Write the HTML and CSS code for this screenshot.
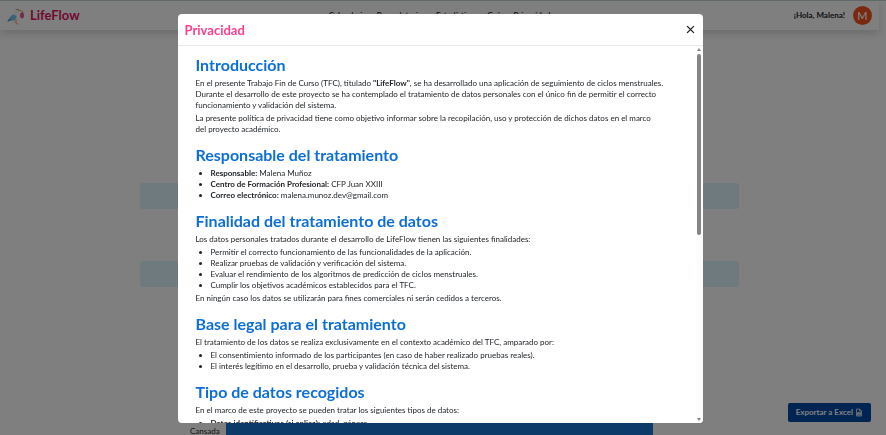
FILE: index.html
```html
<!DOCTYPE html>
<html lang="es">
<head>
<meta charset="utf-8">
<meta name="viewport" content="width=device-width, initial-scale=1">
<title>LifeFlow</title>
<link rel="stylesheet" href="styles.css">
</head>
<body>
<div class="page">
  <header class="navbar">
    <a class="brand" href="#">
      <svg class="stork" viewBox="0 0 36 36" aria-hidden="true">
        <path d="M18 24l1 10h4M15 25l3 8" stroke="#f4a04a" stroke-width="1.500" fill="none"/>
        <path d="M14 4c3-4 9-2 9 2 0 4-4 5-3 10 1 6-2 11-8 11-4 0-5-3-2-7 3-5 7-6 6-10-1-2-3-3-2-6z" fill="#f4f4f4"/>
        <path d="M15 15c-6 0-10 5-12 12 3-1 5-1 8 0 4 1 8-4 8-8z" fill="#7cc3ee"/>
        <path d="M4 24c-2 2-3 4-3 6 3-3 6-2 9-4z" fill="#3b88c3"/>
        <path d="M22 4l11 5-11-1z" fill="#f4a04a"/>
        <path d="M31 7l-2 6h4z" fill="#f27ba6"/>
        <ellipse cx="30" cy="17" rx="4" ry="6" fill="#f0568f"/>
        <circle cx="20" cy="5" r="1" fill="#333"/>
      </svg>
      <span>LifeFlow</span>
    </a>
    <nav class="links">
      <a href="#">Calendario</a>
      <a href="#">Recordatorios</a>
      <a href="#">Estadísticas</a>
      <a href="#">Guía</a>
      <a href="#">Privacidad</a>
    </nav>
    <div class="user"><span>¡Hola, Malena!</span><span class="avatar">M</span></div>
  </header>
  <main class="content">
    <div class="panel"></div>
    <div class="panel"></div>
    <div class="chart"><span class="chart-label">Cansada</span><div class="bar"></div></div>
  </main>
  <button class="export" type="button">Exportar a Excel
    <svg viewBox="0 0 16 16" aria-hidden="true"><path d="M3 1h6l4 4v10H3zM9 1v4h4M5 8h6v5H5zM5 10.500h6M8 8v5" fill="none" stroke="currentColor" stroke-width="1.500"/></svg>
  </button>
</div>

<div class="backdrop">
  <section class="modal" role="dialog" aria-modal="true" aria-labelledby="modal-title">
    <header class="modal-header">
      <h1 id="modal-title">Privacidad</h1>
      <button class="close" type="button" aria-label="Cerrar"><svg viewBox="0 0 8 8" aria-hidden="true"><path d="M1 1l6 6M7 1l-6 6" stroke="currentColor" stroke-width="1.200"/></svg></button>
    </header>
    <div class="modal-body">
      <article class="text">
        <h2>Introducción</h2>
        <p>En el presente Trabajo Fin de Curso (TFC), titulado <strong>"LifeFlow"</strong>, se ha desarrollado una aplicación de seguimiento de ciclos menstruales.<br>Durante el desarrollo de este proyecto se ha contemplado el tratamiento de datos personales con el único fin de permitir el correcto<br>funcionamiento y validación del sistema.</p>
        <p>La presente política de privacidad tiene como objetivo informar sobre la recopilación, uso y protección de dichos datos en el marco<br>del proyecto académico.</p>
        <h2>Responsable del tratamiento</h2>
        <ul>
          <li><strong>Responsable:</strong> Malena Muñoz</li>
          <li><strong>Centro de Formación Profesional:</strong> CFP Juan XXIII</li>
          <li><strong>Correo electrónico:</strong> malena.munoz.dev@gmail.com</li>
        </ul>
        <h2>Finalidad del tratamiento de datos</h2>
        <p>Los datos personales tratados durante el desarrollo de LifeFlow tienen las siguientes finalidades:</p>
        <ul>
          <li>Permitir el correcto funcionamiento de las funcionalidades de la aplicación.</li>
          <li>Realizar pruebas de validación y verificación del sistema.</li>
          <li>Evaluar el rendimiento de los algoritmos de predicción de ciclos menstruales.</li>
          <li>Cumplir los objetivos académicos establecidos para el TFC.</li>
        </ul>
        <p>En ningún caso los datos se utilizarán para fines comerciales ni serán cedidos a terceros.</p>
        <h2>Base legal para el tratamiento</h2>
        <p>El tratamiento de los datos se realiza exclusivamente en el contexto académico del TFC, amparado por:</p>
        <ul>
          <li>El consentimiento informado de los participantes (en caso de haber realizado pruebas reales).</li>
          <li>El interés legítimo en el desarrollo, prueba y validación técnica del sistema.</li>
        </ul>
        <h2>Tipo de datos recogidos</h2>
        <p>En el marco de este proyecto se pueden tratar los siguientes tipos de datos:</p>
        <ul>
          <li><strong>Datos identificativos (si aplica):</strong> edad, género.</li>
        </ul>
      </article>
      <div class="scrollbar" aria-hidden="true">
        <span class="arrow up"></span>
        <span class="track"><span class="thumb"></span></span>
        <span class="arrow down"></span>
      </div>
    </div>
  </section>
</div>
</body>
</html>
```
FILE: styles.css
```css
* { box-sizing: border-box; }

body {
  margin: 0;
  height: 100vh;
  overflow: hidden;
  background: #fff;
  color: #212529;
  font-family: Lato, "Open Sans", sans-serif;
  font-size: 8px;
  line-height: 11px;
}

a { color: inherit; text-decoration: none; }
button { font: inherit; border: 0; }

.page {
  position: relative;
  height: 100vh;
  overflow: hidden;
  padding-right: 7px;
  border-top: 1px solid #c2d0d0;
}

.navbar {
  display: grid;
  grid-template-columns: 1fr auto 1fr;
  align-items: center;
  height: 29px;
  padding: 0 7px;
  background: #fff;
  box-shadow: 0 4px 8px rgba(0, 0, 0, .15);
}

.brand {
  display: flex;
  align-items: center;
  gap: 5px;
  color: #e4105f;
  font-size: 13px;
  font-weight: 700;
}
.stork { width: 18px; height: 20px; }

.links { display: flex; gap: 10px; font-weight: 600; }

.user {
  display: flex;
  align-items: center;
  justify-content: flex-end;
  gap: 8px;
  font-weight: 700;
}
.avatar {
  width: 19px;
  border-radius: 50%;
  background: #f4511e;
  color: #fff;
  font-size: 11px;
  font-weight: 500;
  line-height: 19px;
  text-align: center;
}

.content {
  display: flex;
  flex-direction: column;
  gap: 52px;
  max-width: 599px;
  margin: 153px auto 0;
}
.panel { height: 26px; border-radius: 3px; background: #dcf4fc; }
.chart {
  display: grid;
  grid-template-columns: 30px 1fr;
  align-items: end;
  gap: 6px;
  height: 98px;
  padding: 0 86px 0 50px;
}
.bar { height: 30px; background: #1976d2; }

.export {
  position: absolute;
  right: 15px;
  bottom: 13px;
  display: flex;
  align-items: center;
  gap: 2px;
  padding: 4px 8px;
  border-radius: 2px;
  background: #004aa6;
  color: #fff;
  font-weight: 700;
}
.export svg { width: 8px; height: 9px; }

.backdrop {
  position: fixed;
  inset: 0;
  display: flex;
  justify-content: center;
  padding: 14px 6px 12px 0;
  background: rgba(0, 0, 0, .5);
}
.modal {
  display: flex;
  flex-direction: column;
  width: 100%;
  max-width: 525px;
  overflow: hidden;
  border-radius: 4px;
  background: #fff;
}
.modal-header {
  display: flex;
  flex: none;
  align-items: center;
  justify-content: space-between;
  height: 32px;
  padding: 0 8px 0 7px;
  border-bottom: 1px solid #e5e7e9;
}
.modal-header h1 {
  margin: 0;
  color: #ff3f8e;
  font-size: 13px;
  font-weight: 700;
  line-height: 16px;
}
.close { display: flex; padding: 0; background: none; color: #212529; }
.close svg { width: 9px; height: 9px; }

.modal-body { display: flex; flex: 1; min-height: 0; }
.text { flex: 1; overflow: hidden; padding: 10px 0 0 18px; white-space: nowrap; }
.text h2 {
  margin: 11px 0 4px;
  color: #0d6fd6;
  font-size: 16px;
  font-weight: 700;
  line-height: 18px;
}
.text h2:first-child { margin-top: 0; }
.text p { margin: 0 0 2px; }
.text ul { margin: 0 0 2px; padding-left: 15px; }
.text strong { font-weight: 700; }

.scrollbar {
  display: flex;
  flex: none;
  flex-direction: column;
  align-items: center;
  width: 7px;
  padding: 2px 0;
  background: #fcfcfc;
}
.arrow { border: 2px solid transparent; }
.up { border-top: 0; border-bottom: 3px solid #858585; }
.down { border-bottom: 0; border-top: 3px solid #858585; }
.track { flex: 1; width: 4px; padding: 3px 0; }
.thumb { display: block; height: 50%; border-radius: 2px; background: #858585; }
```
